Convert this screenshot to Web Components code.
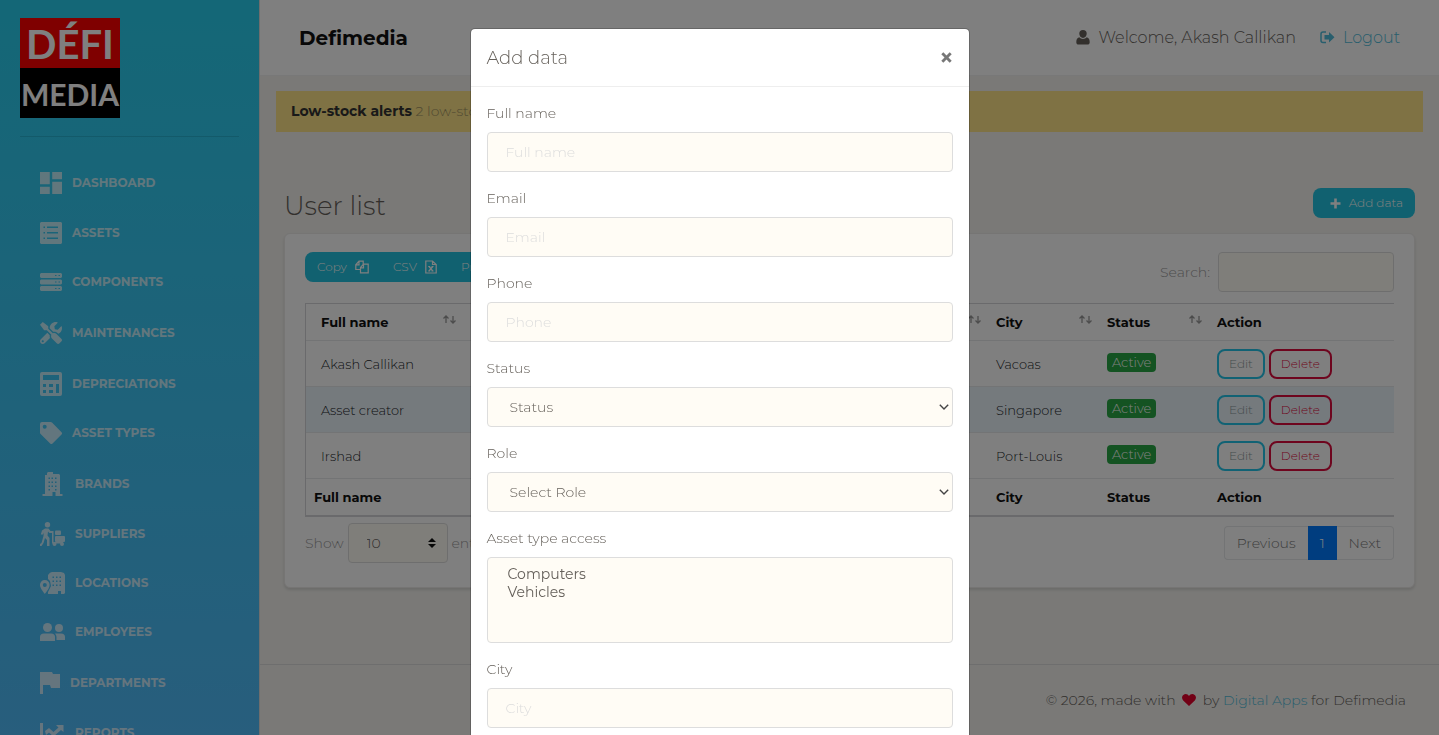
<!DOCTYPE html>
<html lang="en">
<head>
<meta charset="utf-8">
<meta name="viewport" content="width=device-width, initial-scale=1">
<title>Defimedia</title>
<style>
  body {
    margin: 0;
    font-family: Montserrat, Inter, sans-serif;
    font-size: 14px;
    font-weight: 300;
    line-height: 20px;
    color: #66615b;
    background: #f4f3ef;
  }
</style>
</head>
<body>
<app-layout>
  <side-nav slot="nav">
    <nav-item icon="dashboard">Dashboard</nav-item>
    <nav-item icon="assets">Assets</nav-item>
    <nav-item icon="server">Components</nav-item>
    <nav-item icon="tools">Maintenances</nav-item>
    <nav-item icon="calculator">Depreciations</nav-item>
    <nav-item icon="tag">Asset types</nav-item>
    <nav-item icon="building">Brands</nav-item>
    <nav-item icon="supplier">Suppliers</nav-item>
    <nav-item icon="location">Locations</nav-item>
    <nav-item icon="users">Employees</nav-item>
    <nav-item icon="flag">Departments</nav-item>
    <nav-item icon="chart">Reports</nav-item>
  </side-nav>
  <top-bar user="Akash Callikan">Defimedia</top-bar>
  <stock-alert label="Low-stock alerts">2 low-stock items</stock-alert>
  <user-list></user-list>
  <page-footer></page-footer>
</app-layout>

<modal-dialog heading="Add data">
  <form-field label="Full name"></form-field>
  <form-field label="Email" type="email"></form-field>
  <form-field label="Phone" type="tel"></form-field>
  <form-field label="Status" type="select" options="Status"></form-field>
  <form-field label="Role" type="select" options="Select Role"></form-field>
  <form-field label="Asset type access" type="multiple" options="Computers,Vehicles"></form-field>
  <form-field label="City"></form-field>
</modal-dialog>

<script>
// name: [width, height, viewBox, markup]
const ICONS = {
  dashboard: [22, 22, '3 3 18 18', '<path d="M3 13h8V3H3v10zm0 8h8v-6H3v6zm10 0h8V11h-8v10zm0-18v6h8V3h-8z"/>'],
  assets: [22, 22, '0 0 22 22', '<path fill-rule="evenodd" d="M1 0h20l1 1v20l-1 1H1l-1-1V1zM3.500 4.500V6H5V4.500zm3.500 0V6h11V4.500zM3.500 10v1.500H5V10zM7 10v1.500h11V10zM3.500 15.500V17H5v-1.500zm3.500 0V17h11v-1.500z"/>'],
  server: [22, 20, '0 0 22 20', '<path fill-rule="evenodd" d="M1 1h20l1 1v3l-1 1H1L0 5V2zM15 3v1h1.500V3zm3.500 0v1H20V3zM1 7.500h20l1 1v3l-1 1H1l-1-1v-3zM15 9.500v1h1.500v-1zm3.500 0v1H20v-1zM1 14h20l1 1v3l-1 1H1l-1-1v-3zM15 16v1h1.500v-1zm3.500 0v1H20v-1z"/>'],
  tools: [22, 22, '0 0 512 512', '<path d="M501.100 395.700L384 278.600c-23.100-23.100-57.600-27.600-85.400-13.900L192 158.100V96L64 0 0 64l96 128h62.100l106.600 106.600c-13.600 27.800-9.200 62.300 13.900 85.400l117.100 117.100c14.600 14.600 38.200 14.600 52.700 0l52.700-52.700c14.500-14.600 14.500-38.200 0-52.700zM331.700 225c28.300 0 54.900 11 74.900 31l19.400 19.400c15.800-6.900 30.800-16.500 43.800-29.500 37.100-37.100 49.700-89.300 37.900-136.700-2.200-9-13.500-12.100-20.100-5.500l-74.400 74.400-67.900-11.300L334 98.900l74.400-74.400c6.600-6.600 3.400-17.900-5.700-20.200-47.400-11.700-99.600.9-136.600 37.900-28.500 28.500-41.900 66.100-41.200 103.600l82.100 82.100c8.100-1.900 16.500-2.900 24.700-2.900zm-103.900 82l-56.700-56.700L18.700 402.800c-25 25-25 65.500 0 90.500s65.500 25 90.500 0l123.600-123.600c-7.600-19.900-9.900-41.600-5-62.700zM64 472c-13.200 0-24-10.800-24-24 0-13.300 10.700-24 24-24s24 10.700 24 24c0 13.200-10.700 24-24 24z"/>'],
  calculator: [22, 24, '0 0 22 24', '<path fill-rule="evenodd" d="M2 0h18a2 2 0 0 1 2 2v20a2 2 0 0 1-2 2H2a2 2 0 0 1-2-2V2a2 2 0 0 1 2-2zM3 3v5h16V3zM3 12v3h3v-3zm6 0v3h4v-3zm7 0v9h3v-9zM3 18v3h3v-3zm6 0v3h4v-3z"/>'],
  tag: [22, 22, '0 0 22 22', '<path fill-rule="evenodd" d="M0 2a2 2 0 0 1 2-2h8.500a2 2 0 0 1 1.500.6l9.300 9.300a2 2 0 0 1 0 2.900l-8.500 8.500a2 2 0 0 1-2.900 0L.6 12A2 2 0 0 1 0 10.500zM4.700 2.800a2 2 0 1 0 0 4 2 2 0 0 0 0-4z"/>'],
  building: [25, 24, '0 0 25 24', '<path fill-rule="evenodd" d="M5 3h2V1l1-1h5v2h6l1 1v19h2.500v2h-7v-4h-3v4H2.500v-2H5zM8.500 5.500V7H10V5.500zm3 0V7H13V5.500zm3.500 0V7h1.500V5.500zM8.500 9.500V11H10V9.500zm3 0V11H13V9.500zm3.500 0V11h1.500V9.500zM8.500 13.500V15H10v-1.500zm3 0V15H13v-1.500zm3.500 0V15h1.500v-1.500zM8.500 17v1.500H10V17zm6.500 0v1.500h1.500V17z"/>'],
  supplier: [25, 24, '0 0 25 24', '<circle cx="7.500" cy="2.700" r="2.700"/><path d="M5 6.500h3.500l2 2.500h3v2h-4l-1.500-1.500-.5 4 2 2.500v8H7v-6l-2-2-1.500 5L1.500 24H0v-2l1.500-1L3.500 14l.3-3.500L3 12.500H.8L2 8.500z"/><path d="M12 11h1.500v9H23v1.500H12z"/><rect x="15" y="8.500" width="6" height="4.500" rx="1"/><rect x="15" y="14" width="10" height="6" rx="1"/><circle cx="14.500" cy="22" r="2"/><circle cx="22" cy="22" r="2"/>'],
  location: [25, 22, '0 0 25 22', '<path fill-rule="evenodd" d="M8 3l2-2.200L12 0h9l3 1 1 2v18l-1 1h-3v-3h-3v3H8v-2l3-6-1-5-2-2zM12.500 4.500V6H14V4.500zm3.500 0V6h1.500V4.500zm3.500 0V6H21V4.500zM12.500 8.500V10H14V8.500zm3.500 0V10h1.500V8.500zm3.500 0V10H21V8.500zM12.500 12.500V14H14v-1.500zm3.500 0V14h1.500v-1.500zm3.500 0V14H21v-1.500z"/><path fill-rule="evenodd" d="M4.800 8A4.800 4.800 0 0 0 0 13c0 3 3 6.500 4.800 9 2-2.500 4.800-6 4.800-9a4.800 4.800 0 0 0-4.800-5zm0 3a2 2 0 1 1 0 4 2 2 0 0 1 0-4z"/>'],
  users: [25, 20, '0 0 25 20', '<circle cx="7.500" cy="5.500" r="4.500"/><circle cx="19" cy="6" r="4"/><path d="M0 19v-4q0-3.500 4-3.500h7q4 0 4 3.500v4zM16.500 18v-3q0-2-1.500-3.500h6q4 0 4 3.500v3z"/>'],
  flag: [20, 22, '0 0 20 22', '<path d="M0 0h12l1 2h7v14h-9l-1-3H3v9H0z"/>'],
  chart: [25, 22, '0 0 25 22', '<path d="M0 1h3v17h21v3H0zM5 9l4-3 4.500 4 5-4.500L16 3h7.500v7l-2.500-2-7.500 6.500-4.500-4-3 2.500z"/>'],
  user: [14, 15, '0 0 14 15', '<path d="M7 0a3.700 3.700 0 0 1 3.700 3.800C10.700 6 9 8 7 8S3.300 6 3.300 3.800A3.700 3.700 0 0 1 7 0zM3.200 7.200A5 5 0 0 0 7 9a5 5 0 0 0 3.800-1.800C13 7.600 13.700 10 13.700 12.200c0 1.500-.9 2.400-2.300 2.400H2.600C1.200 14.600.3 13.700.3 12.200.3 10 1 7.600 3.200 7.200z"/>'],
  logout: [15, 13, '0 0 15 13', '<path d="M6 1H3a2 2 0 0 0-2 2v6.500a2 2 0 0 0 2 2h3" fill="none" stroke="currentColor" stroke-width="1.500"/><path d="M9 1l5.500 5.200L9 11.500v-3H4.500V4H9z"/>'],
  plus: [11, 11, '0 0 11 11', '<path d="M4.200.5h2.600v3.700h3.700v2.600H6.800v3.700H4.200V6.800H.5V4.200h3.700z"/>'],
  copy: [14, 14, '0 0 14 14', '<path fill="none" stroke="currentColor" stroke-width="1.200" d="M5 9.500H.8V4.800L4 1.200h4.200v3M.8 4.800H4V1.200M5.500 12.800V7.500l3-3.300h4.700v8.600zM5.500 7.800h3V4.200"/>'],
  file: [12, 14, '0 0 12 14', '<path fill="none" stroke="currentColor" stroke-width="1.200" d="M.8 1h6.700l3.700 3.500V13H.8zM7.500 1v3.500h3.700M4 6.500l3.800 4.500M7.800 6.500L4 11M3.200 11h2M6.500 11h2M3.200 6.500h2M6.500 6.500h2"/>'],
  sort: [13, 9, '0 0 13 9', '<path fill="none" stroke="currentColor" stroke-width="1.300" d="M3 8V1M.5 3.500L3 1l2.500 2.500M10 1v7M7.500 5.500L10 8l2.500-2.500"/>'],
  updown: [8, 10, '0 0 8 10', '<path d="M4 0l4 4H0zM4 10L0 6h8z"/>'],
  chevron: [10, 6, '0 0 10 6', '<path fill="none" stroke="currentColor" stroke-width="1.400" d="M.8.8L5 5 9.200.8"/>'],
  heart: [14, 12, '0 0 14 12', '<path d="M7 12L1.200 6.400C-.5 4.700-.2 2 1.300.9 3.200-.6 5.800-.2 7 2 8.200-.2 10.800-.6 12.700.9c1.500 1.100 1.800 3.800.1 5.500z"/>'],
  close: [11, 11, '0 0 11 11', '<path d="M2.300.3L5.500 3.500 8.700.3l2 2L7.500 5.500l3.200 3.200-2 2L5.500 7.500l-3.200 3.200-2-2L3.500 5.500.3 2.300z"/>']
};

const icon = (name) => {
  const [w, h, box, body] = ICONS[name];
  return `<svg width="${w}" height="${h}" viewBox="${box}" fill="currentColor" aria-hidden="true">${body}</svg>`;
};

// Small base class: every element renders once into an open root
class BaseElement extends HTMLElement {
  connectedCallback() {
    if (!this.shadowRoot) this.attachShadow({ mode: 'open' });
    this.shadowRoot.innerHTML = this.render();
  }
}

class AppLayout extends BaseElement {
  render() {
    return `
      <style>
        :host { display: grid; grid-template-columns: 260px minmax(0, 1fr); height: 100vh; overflow: hidden; }
        main { display: flex; flex-direction: column; min-width: 0; }
      </style>
      <slot name="nav"></slot>
      <main><slot></slot></main>
    `;
  }
}

class SideNav extends BaseElement {
  render() {
    return `
      <style>
        :host {
          display: block;
          box-sizing: border-box;
          overflow: hidden;
          padding: 18px 20px 0;
          border-right: 1px solid #ddd;
          background: linear-gradient(#28cfee, #50bcfa);
        }
        .logo { width: 100px; color: #fff; font-family: Lato, sans-serif; font-weight: 700; text-align: center; }
        .logo span { display: block; height: 50px; line-height: 52px; }
        .top { background: #f00; font-size: 40px; }
        .bottom { background: #000; font-size: 30px; }
        hr { margin: 18px 0 35px; border: 0; border-top: 1px solid #27b4d4; }
        ul { margin: 0; padding: 0 20px; }
      </style>
      <div class="logo"><span class="top">DÉFI</span><span class="bottom">MEDIA</span></div>
      <hr>
      <nav><slot></slot></nav>
    `;
  }
}

class NavItem extends BaseElement {
  render() {
    return `
      <style>
        :host { display: block; height: 50px; padding-left: 20px; }
        a {
          display: flex;
          align-items: center;
          gap: 10px;
          color: #fff;
          opacity: .7;
          font-size: 12px;
          font-weight: 700;
          text-transform: uppercase;
          text-decoration: none;
        }
      </style>
      <a href="#">${icon(this.getAttribute('icon'))}<span><slot></slot></span></a>
    `;
  }
}

class TopBar extends BaseElement {
  render() {
    return `
      <style>
        :host {
          display: flex;
          align-items: center;
          justify-content: space-between;
          height: 75px;
          padding: 0 39px;
          background: #fff;
          border-bottom: 1px solid #f0f0f0;
        }
        .brand { color: #111; font-size: 20px; font-weight: 700; text-decoration: none; }
        .links { display: flex; gap: 24px; font-size: 16px; }
        .links > * { display: flex; align-items: center; gap: 8px; }
        .links a { color: #51bcda; text-decoration: none; }
      </style>
      <a class="brand" href="#"><slot></slot></a>
      <div class="links">
        <span>${icon('user')}Welcome, ${this.getAttribute('user')}</span>
        <a href="#">${icon('logout')}Logout</a>
      </div>
    `;
  }
}

class StockAlert extends BaseElement {
  render() {
    return `
      <style>
        :host {
          display: block;
          margin: 15px 16px 0;
          padding: 10px 15px;
          background: #fee488;
          color: #a39464;
          line-height: 21px;
        }
        strong { color: #333; font-weight: 700; }
      </style>
      <strong>${this.getAttribute('label')}</strong> <slot></slot>
    `;
  }
}

class UserTable extends BaseElement {
  constructor() {
    super();
    this.users = [
      { name: 'Akash Callikan', city: 'Vacoas' },
      { name: 'Asset creator', city: 'Singapore' },
      { name: 'Irshad', city: 'Port-Louis' }
    ];
  }

  render() {
    const heads = ['Full name', 'Email', 'City', 'Status', 'Action'];
    return `
      <style>
        :host { display: block; font-size: 13px; }
        table { width: 100%; table-layout: fixed; border-collapse: separate; border-spacing: 0; border: solid #d5d5d8; border-width: 1px 0 2px 1px; color: #212529; }
        .name { width: 150px; }
        .city { width: 111px; }
        .status { width: 110px; }
        .action { width: 192px; }
        th, td { box-sizing: border-box; padding: 8px 0 8px 15px; text-align: left; }
        td { padding-bottom: 7px; }
        thead th, td { border-bottom: 1px solid #e6e8ea; }
        th { color: #111; font-weight: 700; }
        thead div { display: flex; justify-content: space-between; }
        thead svg { color: #999; margin-top: 3px; }
        tfoot th:first-child { padding-left: 8px; }
        tbody tr:nth-child(even) { background: #ebf4fb; }
        .badge { display: inline-block; padding: 0 5px; margin-bottom: 4px; border-radius: 4px; background: #28a745; color: #fff; line-height: 19px; }
        td:last-child div { display: flex; gap: 4px; }
        button {
          height: 30px;
          padding: 0 10px;
          border: 2px solid #23c5e8;
          border-radius: 8px;
          background: transparent;
          color: #8a9a9c;
          font: inherit;
          font-size: 12px;
        }
        .delete { border-color: #dc0a3c; color: #dc0a3c; }
      </style>
      <table>
        <colgroup><col class="name"><col><col class="city"><col class="status"><col class="action"></colgroup>
        <thead>
          <tr>${heads.map((h, i) => `<th><div>${h}${i < 4 ? icon('sort') : ''}</div></th>`).join('')}</tr>
        </thead>
        <tbody>
          ${this.users.map(u => `
            <tr>
              <td>${u.name}</td>
              <td></td>
              <td>${u.city}</td>
              <td><span class="badge">Active</span></td>
              <td><div><button type="button">Edit</button><button type="button" class="delete">Delete</button></div></td>
            </tr>
          `).join('')}
        </tbody>
        <tfoot>
          <tr>${heads.map(h => `<th>${h}</th>`).join('')}</tr>
        </tfoot>
      </table>
    `;
  }
}

class UserList extends BaseElement {
  render() {
    return `
      <style>
        :host { display: block; padding: 56px 24px 0; }
        .row { display: flex; justify-content: space-between; }
        h1 { margin: 0; font-size: 26px; font-weight: 300; line-height: 36px; }
        button { font: inherit; border: 0; }
        .add, .exports { border-radius: 8px; background: #22c3e0; color: #fff; height: 30px; font-size: 12px; }
        .add { display: flex; align-items: center; gap: 8px; padding: 0 12px 0 17px; }
        .exports { display: flex; }
        .exports button { display: flex; align-items: center; gap: 8px; padding: 0 12px; background: none; color: inherit; }
        .card { margin-top: 9px; padding: 18px 20px 24px; border: 1px solid #eceae8; border-radius: 6px; background: #fff; box-shadow: 0 2px 3px rgba(0,0,0,.12); }
        .muted { color: #9a9a9a; }
        label { display: flex; align-items: center; gap: 8px; }
        input, select { box-sizing: border-box; height: 40px; border: 1px solid #ddd; border-radius: 4px; background: #fffcf5; font: inherit; color: #66615b; }
        input { width: 176px; }
        user-table { margin: 11px 0 6px; }
        .length { gap: 4px; }
        .picker { display: grid; align-items: center; color: #111; }
        .picker > * { grid-area: 1 / 1; }
        .picker svg { justify-self: end; margin-right: 12px; }
        select { width: 100px; padding: 0 18px; appearance: none; }
        .pages { display: flex; margin-top: 3px; height: 34px; }
        .pages a { box-sizing: border-box; padding: 0 12px; border: solid #e6e8ea; border-width: 1px 0; color: #7a7a7a; line-height: 32px; text-decoration: none; }
        .pages a:first-child { border-left-width: 1px; border-radius: 4px 0 0 4px; }
        .pages a:last-child { border-right-width: 1px; border-radius: 0 4px 4px 0; }
        .pages .current { border-color: #007bff; background: #007bff; color: #fff; }
      </style>
      <div class="row">
        <h1>User list</h1>
        <button class="add" type="button">${icon('plus')}Add data</button>
      </div>
      <div class="card">
        <div class="row">
          <div class="exports">
            <button type="button">Copy ${icon('copy')}</button>
            <button type="button">CSV ${icon('file')}</button>
            <button type="button">Print</button>
          </div>
          <label class="muted">Search: <input type="search"></label>
        </div>
        <user-table></user-table>
        <div class="row muted">
          <label class="length">Show
            <span class="picker"><select><option>10</option></select>${icon('updown')}</span>
            entries
          </label>
          <nav class="pages">
            <a href="#">Previous</a><a class="current" href="#">1</a><a href="#">Next</a>
          </nav>
        </div>
      </div>
    `;
  }
}

class PageFooter extends BaseElement {
  render() {
    return `
      <style>
        :host { display: block; margin-top: auto; padding: 25px 33px; border-top: 1px solid #ddd; text-align: right; }
        a { color: #51bcda; text-decoration: none; }
        svg { margin: 0 3px; color: #e4002b; vertical-align: -1px; }
      </style>
      © 2026, made with ${icon('heart')} by <a href="#">Digital Apps</a> for Defimedia
    `;
  }
}

class ModalDialog extends BaseElement {
  render() {
    return `
      <style>
        :host { display: block; position: fixed; inset: 0; overflow: auto; scrollbar-width: none; background: rgba(0,0,0,.5); }
        .dialog { box-sizing: border-box; max-width: 500px; margin: 28px auto; border: 1px solid rgba(0,0,0,.2); border-radius: 5px; background: #fff; background-clip: padding-box; }
        header { display: flex; align-items: center; justify-content: space-between; height: 57px; padding: 0 17px 0 16px; border-bottom: 1px solid #eee; }
        h2 { margin: 0; font-size: 18px; font-weight: 300; }
        button { display: flex; padding: 0; border: 0; background: none; color: #777; }
        form { display: flex; flex-direction: column; gap: 16px; padding: 16px; }
      </style>
      <div class="dialog" role="dialog" aria-label="${this.getAttribute('heading')}">
        <header>
          <h2>${this.getAttribute('heading')}</h2>
          <button type="button" aria-label="Close">${icon('close')}</button>
        </header>
        <form><slot></slot></form>
      </div>
    `;
  }
}

class FormField extends BaseElement {
  control() {
    const type = this.getAttribute('type') || 'text';
    if (type === 'select' || type === 'multiple') {
      const options = this.getAttribute('options').split(',').map(o => `<option>${o}</option>`).join('');
      if (type === 'multiple') return `<select id="control" multiple>${options}</select>`;
      return `<div class="picker"><select id="control">${options}</select>${icon('chevron')}</div>`;
    }
    return `<input id="control" type="${type}" placeholder="${this.getAttribute('label')}">`;
  }

  render() {
    return `
      <style>
        :host { display: flex; flex-direction: column; gap: 8px; line-height: 21px; }
        input, select {
          box-sizing: border-box;
          width: 100%;
          height: 40px;
          padding: 0 18px;
          border: 1px solid #ddd;
          border-radius: 4px;
          background-color: #fffcf5;
          color: #66615b;
          font: inherit;
        }
        .picker { display: grid; align-items: center; }
        .picker > * { grid-area: 1 / 1; }
        .picker svg { justify-self: end; margin-right: 4px; color: #444; }
        .picker select { padding: 0 22px; appearance: none; }
        select[multiple] { height: 86px; padding: 7px 18px; overflow: hidden; }
        option { min-height: 0; padding: 0 2px; }
        ::placeholder { color: #ddd; opacity: 1; }
      </style>
      <label for="control">${this.getAttribute('label')}</label>
      ${this.control()}
    `;
  }
}

customElements.define('app-layout', AppLayout);
customElements.define('side-nav', SideNav);
customElements.define('nav-item', NavItem);
customElements.define('top-bar', TopBar);
customElements.define('stock-alert', StockAlert);
customElements.define('user-table', UserTable);
customElements.define('user-list', UserList);
customElements.define('page-footer', PageFooter);
customElements.define('modal-dialog', ModalDialog);
customElements.define('form-field', FormField);
</script>
</body>
</html>
